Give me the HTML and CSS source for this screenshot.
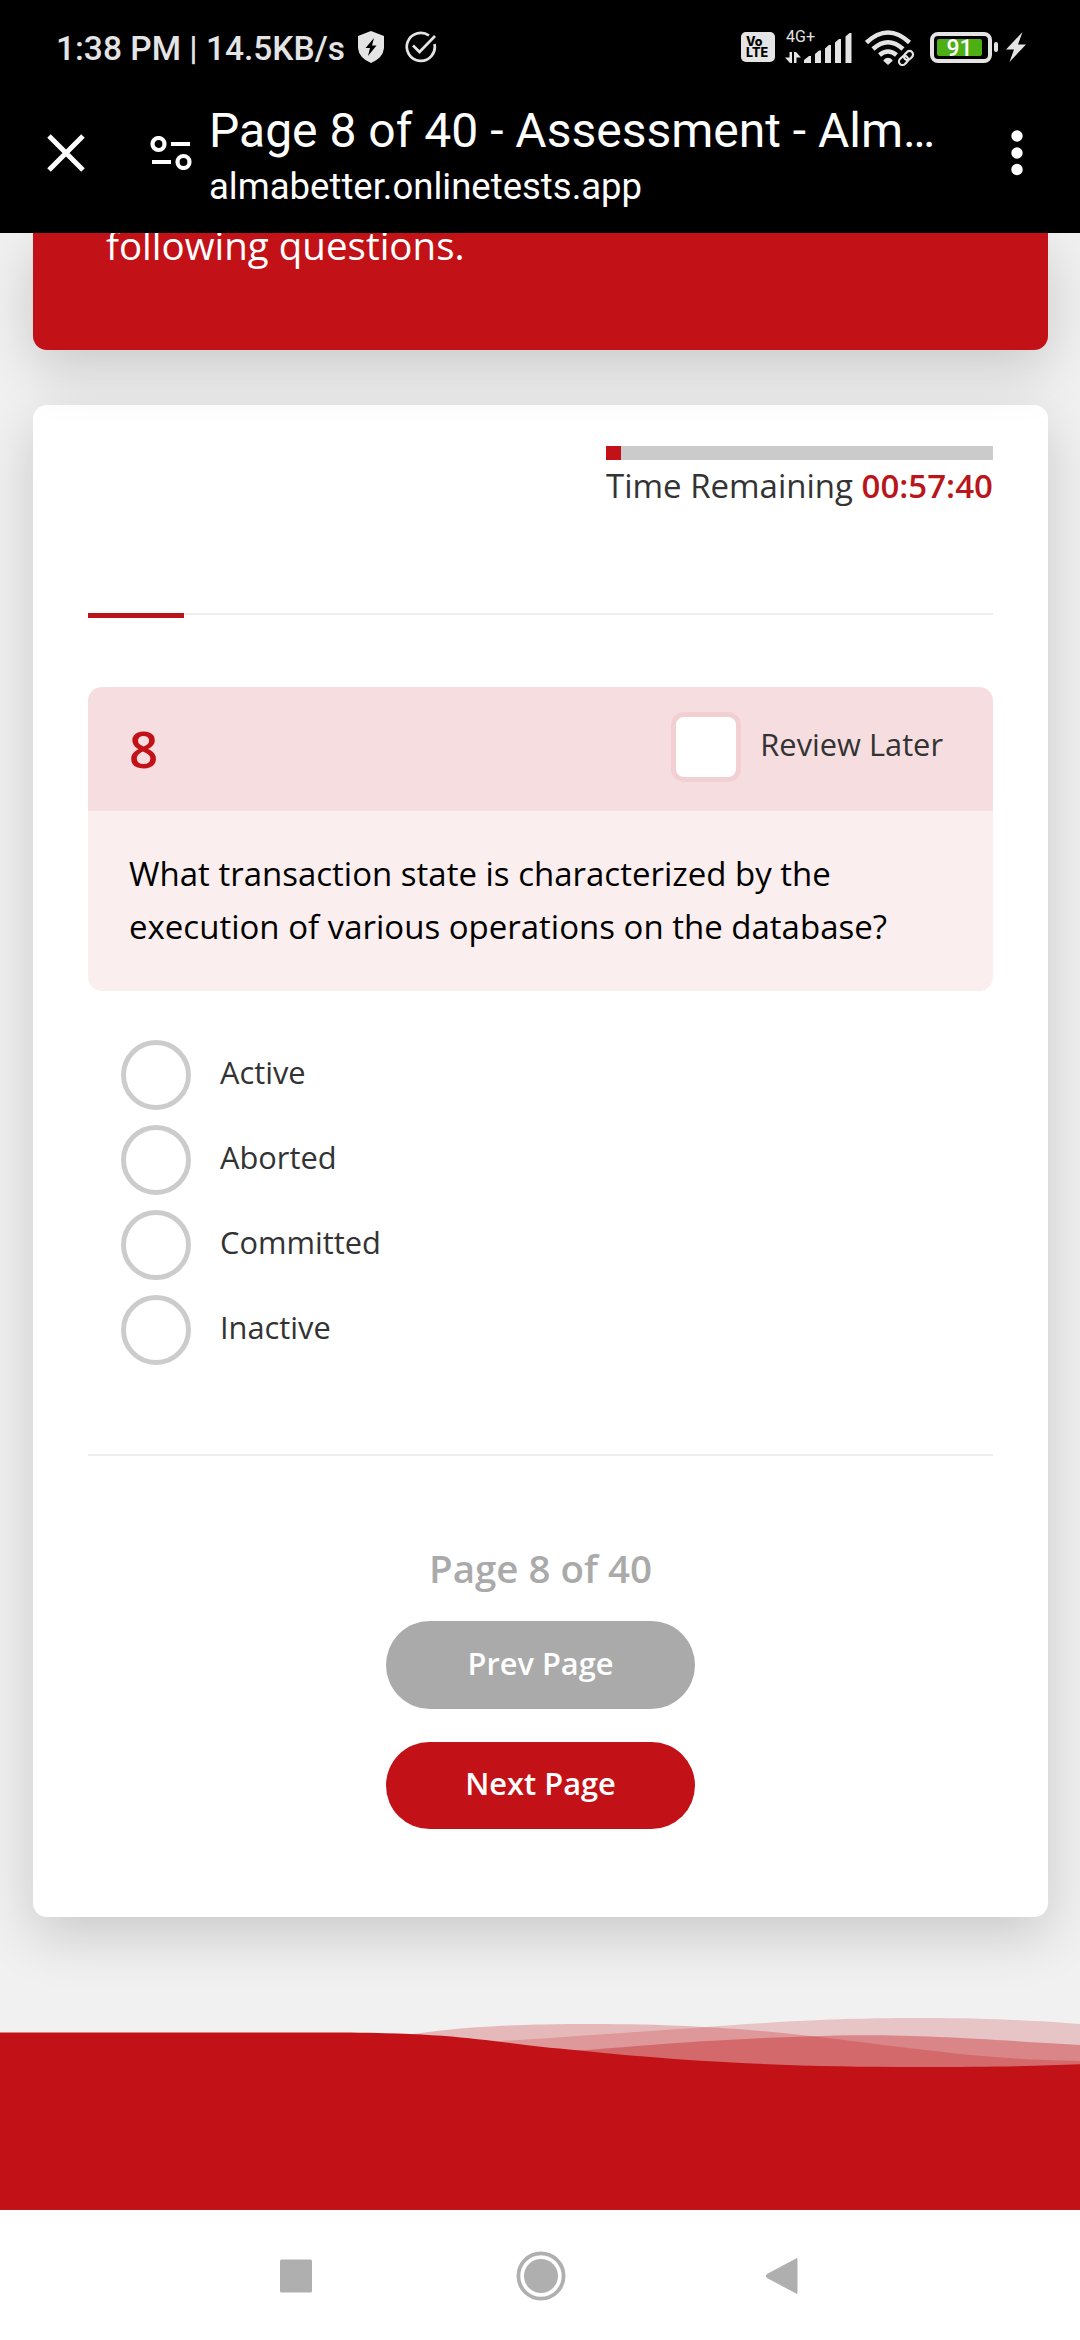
FILE: index.html
```html
<!DOCTYPE html>
<html lang="en">
<head>
<meta charset="utf-8">
<title>Page 8 of 40 - Assessment</title>
<link rel="stylesheet" href="styles.css">
</head>
<body>
<header class="chrome">
  <div class="status">
    <span class="clock">1:38 PM | 14.5KB/s</span>
    <svg class="shield" viewBox="0 0 28 32" width="28" height="32"><path d="M14 0 27 5V17Q26 27 14 32Q2 27 1 17V5Z" fill="#e4e4e4"/><path d="M17 7 8.500 17H13L11 25 19.500 14.500H15Z" fill="#000"/></svg>
    <svg class="done" viewBox="0 0 32 32" width="32" height="32"><g fill="none" stroke="#e4e4e4" stroke-width="2.700"><path d="M24 4.500A14 14 0 1 0 29.500 13"/><path d="M8 14.500 14.500 21 30 5"/></g></svg>
    <div class="volte"><span>Vo</span><span>LTE</span></div>
    <div class="cell">
      <span class="net">4G+</span>
      <svg viewBox="0 0 68 34" width="68" height="34"><g fill="#e4e4e4"><path d="M4.500 22H7V33H5L0 27.500H4.500ZM9 22H11L16 27.500H11.500V33H9Z"/><path d="M19 33V30L24 26H26V33ZM30 33V24L34 20.500H36V33ZM40 33V18.500L44 15H46V33ZM50 33V12.500L54 9H56V33ZM60.500 33V6.500L64.500 3H66.500V33Z"/></g></svg>
    </div>
    <svg class="wifi" viewBox="0 0 50 36" width="50" height="36"><g fill="none" stroke="#e4e4e4" stroke-width="4.500"><path d="M1.500 12.500Q23 -7.500 44.500 12.500"/><path d="M8 19Q23 5.500 38 19"/><path d="M14.500 25Q23 18 31.500 25"/></g><path d="M18.500 30Q23 25.500 27.500 30V31L23 35L18.500 31Z" fill="#e4e4e4"/><g transform="translate(41 28) rotate(-45)" fill="none"><path d="M-8 0H8" stroke="#000" stroke-width="12"/><rect x="-8.500" y="-3.500" width="10" height="7" rx="3.500" stroke="#e4e4e4" stroke-width="2.200"/><rect x="-1.500" y="-3.500" width="10" height="7" rx="3.500" stroke="#e4e4e4" stroke-width="2.200"/></g></svg>
    <div class="battery"><span class="level">91</span></div>
    <i class="nub"></i>
    <svg class="bolt" viewBox="0 0 20 30" width="20" height="30"><path d="M16.500 0 0 17.500H8L3.500 30 20 12.500H12Z" fill="#e4e4e4"/></svg>
  </div>
  <div class="toolbar">
    <svg class="close" viewBox="0 0 38 38" width="38" height="38"><path d="M2 2 36 36M36 2 2 36" stroke="#fff" stroke-width="5"/></svg>
    <svg class="tune" viewBox="0 0 42 34" width="42" height="34"><g fill="none" stroke="#fff" stroke-width="4.200"><circle cx="8.500" cy="8" r="6"/><circle cx="33.500" cy="26" r="6"/><path d="M21 8H40M2 26H21"/></g></svg>
    <div class="titles"><div class="title">Page 8 of 40 - Assessment - Alm…</div><div class="url">almabetter.onlinetests.app</div></div>
    <svg class="more" viewBox="0 0 12 46" width="12" height="46"><g fill="#fff"><circle cx="6" cy="6" r="5.700"/><circle cx="6" cy="23" r="5.700"/><circle cx="6" cy="39.500" r="5.700"/></g></svg>
  </div>
</header>
<main class="page">
  <section class="intro"><p>following questions.</p></section>
  <section class="card">
    <div class="timer">
      <div class="track"><div class="fill" style="width:4%"></div></div>
      <p>Time Remaining <b>00:57:40</b></p>
    </div>
    <div class="divider"><div class="done-bar"></div></div>
    <article class="question">
      <div class="qhead"><span class="num">8</span><label class="review"><i class="check"></i><span>Review Later</span></label></div>
      <div class="qtext">What transaction state is characterized by the<br>execution of various operations on the database?</div>
    </article>
    <ul class="options">
      <li><i></i><span>Active</span></li>
      <li><i></i><span>Aborted</span></li>
      <li><i></i><span>Committed</span></li>
      <li><i></i><span>Inactive</span></li>
    </ul>
    <div class="divider"></div>
    <div class="pager">
      <p>Page 8 of 40</p>
      <button class="prev">Prev Page</button>
      <button class="next">Next Page</button>
    </div>
  </section>
  <svg class="wave" viewBox="0 0 1080 220" width="1080" height="220"><g fill="#c31217">
    <path opacity=".25" d="M340 57C400 48 430 34 590 34C730 34 810 46 860 52C940 62 1000 70 1080 71V100H340Z"/>
    <path opacity=".2" d="M340 61C500 52 620 43 694 38C810 29 860 28 925 28C990 28 1040 31 1080 34V100H340Z"/>
    <path opacity=".35" d="M500 66C600 60 700 49 806 46.500C900 43 960 48 1080 55V100H500Z"/>
    <path d="M0 42.500H340C470 43 490 53 580 60.500C700 73 800 77 920 77C990 77 1040 76 1080 74.300V220H0Z"/>
  </g></svg>
</main>
<nav class="nav">
  <svg viewBox="0 0 34 50" width="34" height="50"><rect x="1" y="8.500" width="32" height="33" rx="1.500" fill="#afafaf"/></svg>
  <svg class="home" viewBox="0 0 50 50" width="50" height="50"><circle cx="25" cy="25" r="22.600" fill="none" stroke="#afafaf" stroke-width="3.800"/><circle cx="25" cy="25" r="17" fill="#afafaf"/></svg>
  <svg viewBox="0 0 34 50" width="34" height="50"><path d="M32 7.500V42.500L2 26.500Q1 25 2 23.500Z" fill="#afafaf" stroke="#afafaf" stroke-linejoin="round"/></svg>
</nav>
</body>
</html>
```
FILE: styles.css
```css
* { box-sizing: border-box; margin: 0; padding: 0; }
body { width: 1080px; height: 2340px; overflow: hidden; display: flex; flex-direction: column; background: #f1f1f1; font-family: "Open Sans", sans-serif; color: #333; }
svg { display: block; flex: none; }
.chrome { height: 233px; flex: none; background: #000; position: relative; z-index: 3; font-family: Roboto, sans-serif; }
.status { height: 94px; display: flex; align-items: center; padding-left: 56px; color: #e4e4e4; }
.clock { width: 301px; font-size: 33.500px; font-weight: 500; white-space: nowrap; line-height: 40px; padding-top: 3px; }
.done { margin-left: 20px; }
.volte { margin-left: 304px; width: 34px; height: 30px; border-radius: 5px; background: #e4e4e4; color: #000; display: flex; flex-direction: column; font: 800 12.500px/11px Inter, sans-serif; padding: 4px 0 0 5px; }
.cell { position: relative; margin-left: 10px; }
.net { position: absolute; left: 1px; top: -1px; font-size: 16px; line-height: 16px; }
.wifi { margin: 2px 0 0 12px; }
.battery { margin-left: 15px; width: 62px; height: 31px; border: 4px solid #e4e4e4; border-radius: 8px; padding: 3px 0 0 3px; }
.level { display: block; width: 45px; height: 17px; background: #4caf14; border-radius: 2px; color: #fff; font-size: 23px; font-weight: 500; line-height: 19px; text-align: center; }
.nub { width: 4px; height: 10px; border-radius: 2px; background: #e4e4e4; margin-left: 2px; }
.bolt { margin-left: 8px; }
.toolbar { display: flex; height: 118px; align-items: center; padding-left: 47px; color: #fff; }
.tune { margin-left: 65px; }
.titles { margin-left: 17px; width: 802px; height: 118px; padding-top: 9px; white-space: nowrap; }
.title { font-size: 48px; line-height: 56px; }
.url { font-size: 36.500px; line-height: 44px; padding-top: 6px; }
.page { height: 1977px; flex: none; padding: 0 32px 0 33px; position: relative; overflow: hidden; }
.intro { display: flex; height: 117px; position: relative; z-index: 2; padding-left: 73px; background: #c31217; border-radius: 0 0 14px 14px; color: #fff; box-shadow: 0 18px 55px rgba(0,0,0,.17); font-size: 38.500px; line-height: 52px; }
.intro p { margin-top: -14px; }
.card { margin-top: 55px; height: 1512px; background: #fff; border-radius: 14px; box-shadow: 0 18px 55px rgba(0,0,0,.17); padding: 41px 55px 0; }
.timer { width: 387px; margin-left: auto; height: 167px; font-size: 33px; line-height: 45px; white-space: nowrap; }
.track { height: 14px; background: #cbcbcb; margin-bottom: 3px; }
.fill { height: 14px; background: #c31217; }
.timer b { font-weight: 600; color: #b9151a; }
.divider { height: 2px; background: #eee; }
.done-bar { width: 96px; height: 5px; background: #b9151a; }
.question { margin-top: 72px; border-radius: 14px; overflow: hidden; }
.qhead { height: 124px; background: #f6dee0; padding: 0 50px 0 41px; display: flex; align-items: center; justify-content: space-between; }
.num { font-size: 51px; font-weight: 600; line-height: 68px; margin-top: -3px; color: #c31217; }
.review { display: flex; align-items: center; font-size: 30.800px; line-height: 40px; gap: 19px; }
.review span { margin-top: -10px; }
.check { flex: none; width: 70px; height: 70px; border: 5px solid #f2d0d2; border-radius: 13px; background: #fff; margin-top: -4px; }
.qtext { height: 180px; padding: 36px 41px; background: #faeeee; color: #000; font-size: 33px; line-height: 53px; white-space: nowrap; }
.options { list-style: none; padding: 49px 0 0 33px; height: 463px; display: flex; flex-direction: column; gap: 15px; font-size: 30.800px; }
.options li { height: 70px; display: flex; align-items: center; gap: 29px; }
.options i { width: 70px; height: 70px; border-radius: 50%; border: 5px solid #ccc; }
.options span { line-height: 40px; margin-top: -6px; }
.pager { display: flex; flex-direction: column; align-items: center; color: #aaa; }
.pager p { font-size: 38.500px; font-weight: 600; line-height: 52px; margin: 86px 0 27px; }
.pager button { width: 309px; height: 88px; border: 0; border-radius: 44px; color: #fff; font: 600 30.800px/40px "Open Sans", sans-serif; padding-bottom: 5px; }
.pager .prev { background: #aaa; }
.pager .next { background: #c31217; margin-top: 33px; height: 87px; padding-bottom: 6px; }
.wave { margin: 73px 0 0 -33px; position: relative; z-index: 1; }
.nav { height: 130px; flex: none; background: #fff; display: flex; justify-content: space-between; padding: 41px 281px 0 279px; position: relative; z-index: 3; }
.home { margin-left: 3px; }
```
